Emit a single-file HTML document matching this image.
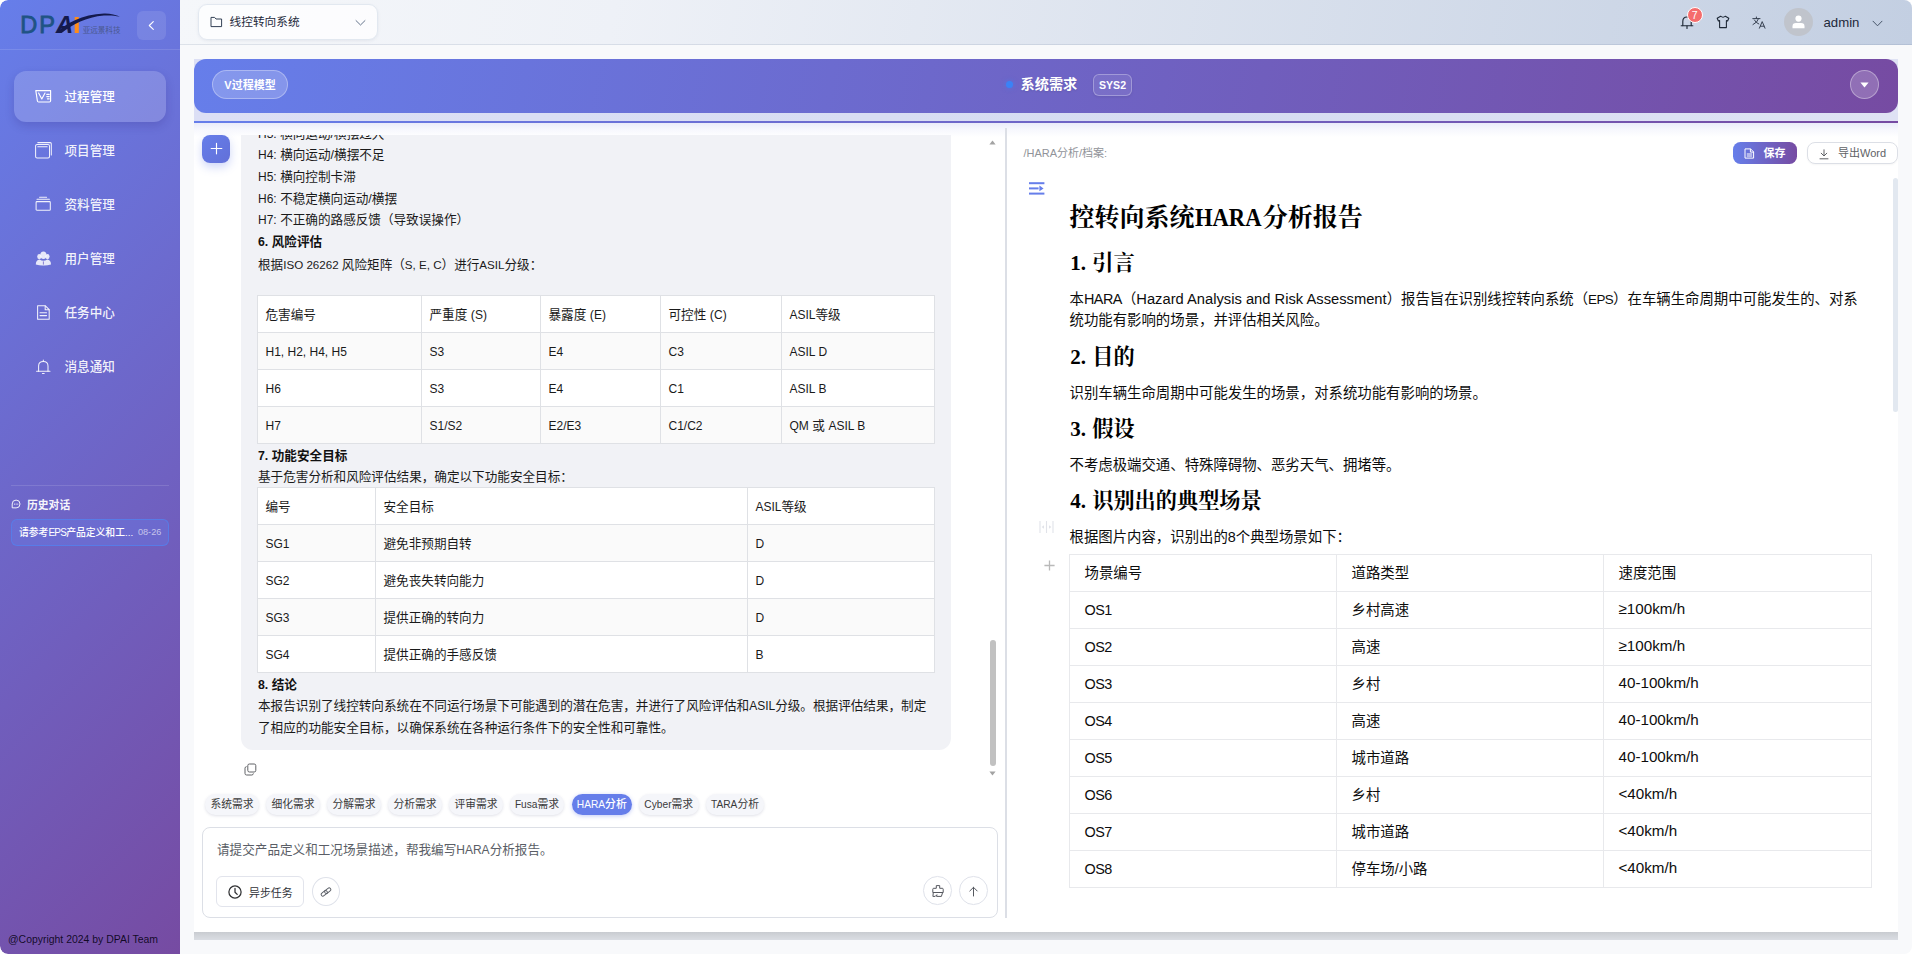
<!DOCTYPE html>
<html lang="zh-CN">
<head>
<meta charset="utf-8">
<title>DPAI</title>
<style>
*{box-sizing:border-box;margin:0;padding:0}
html,body{width:1912px;height:954px;overflow:hidden;background:#fff}
body{font-family:"Liberation Sans","Noto Sans CJK SC",sans-serif;color:#111;-webkit-font-smoothing:antialiased}
#app{position:relative;width:1912px;height:954px;overflow:hidden;background:#f8f9fb;border-radius:8px}
.abs{position:absolute}
/* ---------- sidebar ---------- */
.sb{position:absolute;left:0;top:0;width:180px;height:954px;background:linear-gradient(135deg,#667eea 0%,#764ba2 100%);border-radius:8px 0 0 8px}
.sb .logo{position:absolute;left:0;top:0;width:180px;height:50px;border-bottom:1px solid rgba(255,255,255,.12)}
.sb .collapse{position:absolute;left:137px;top:11px;width:29px;height:29px;border-radius:6px;background:rgba(255,255,255,.1)}
.mi{position:absolute;left:14px;width:152px;height:51px;border-radius:12px;color:rgba(255,255,255,.92);font-size:12.6px;font-weight:500}
.mi.act{background:rgba(255,255,255,.17);box-shadow:0 4px 10px rgba(40,30,110,.18);color:#fff}
.mi svg{position:absolute;left:21px;top:17px;width:17px;height:17px}
.mi span{position:absolute;left:50.5px;top:.9px;line-height:51px;white-space:nowrap}
.sb .hr{position:absolute;left:11px;top:485px;width:158px;height:1px;background:rgba(255,255,255,.13)}
.sb .hist-t{position:absolute;left:27px;top:496.6px;font-size:10.8px;font-weight:700;color:rgba(255,255,255,.95);line-height:16px}
.sb .hist-i{position:absolute;left:11px;top:519px;width:158px;height:27px;border-radius:6px;border:1px solid rgba(84,128,236,.8);background:rgba(102,126,234,.36);color:#fff;font-size:9.8px;font-weight:500;line-height:25px;padding-left:7px;white-space:nowrap}
.sb .hist-i b{font-weight:500;font-size:10px;letter-spacing:-.75px}
.sb .hist-i i{position:absolute;left:126px;top:0;font-style:normal;font-weight:400;font-size:9.1px;color:rgba(255,255,255,.62)}
.sb .copy{position:absolute;left:8px;top:931.8px;font-size:10.45px;line-height:16px;color:rgba(12,6,28,.95);white-space:nowrap}
/* ---------- header ---------- */
.hd{position:absolute;left:180px;top:0;width:1732px;height:45px;background:linear-gradient(100deg,#f5f7fa 0%,#eef1f7 25%,#c3cfe2 100%);border-bottom:1px solid rgba(100,116,150,.16)}
.sel{position:absolute;left:18px;top:4px;width:179.6px;height:35.6px;border:1px solid #e2e8f0;border-radius:9px;background:rgba(255,255,255,.72);box-shadow:0 1px 3px rgba(120,130,160,.12)}
.sel span{position:absolute;left:30.5px;top:-.6px;line-height:35px;font-size:11.7px;color:#1e293b}

/* ---------- banner ---------- */
.bnw{position:absolute;left:194px;top:59px;width:1704px;height:64px;background:linear-gradient(90deg,#667eea 0%,#764ba2 100%)}
.bnl{position:absolute;left:0;top:0;width:1704px;height:62px;background:linear-gradient(90deg,#dcdff5 0%,#d6dcf2 60%,#dfe2f4 100%)}
.bn{position:absolute;left:0;top:0;width:1703.5px;height:54px;border-radius:12px;background:linear-gradient(100deg,#667eea 0%,#764ba2 100%)}
.pill{position:absolute;left:18px;top:11px;width:76px;height:29px;border-radius:15px;border:1px solid rgba(255,255,255,.32);background:rgba(255,255,255,.2);color:#fff;font-size:11px;font-weight:700;line-height:28.6px;text-align:center;white-space:nowrap}
.dot{position:absolute;left:812px;top:22px;width:7px;height:7px;border-radius:50%;background:#3b82f6;box-shadow:0 0 5px rgba(59,130,246,.55)}
.bt{position:absolute;left:826.5px;top:0;line-height:51px;font-size:14.2px;font-weight:700;color:#fff;text-shadow:0 1px 2px rgba(0,0,0,.12);white-space:nowrap}
.sys{position:absolute;left:899px;top:14.5px;width:39px;height:22.5px;border-radius:6px;border:1px solid rgba(255,255,255,.3);background:rgba(255,255,255,.08);color:#fff;font-size:10.6px;font-weight:700;line-height:20.5px;text-align:center;box-shadow:0 1px 3px rgba(0,0,0,.08)}
.dd{position:absolute;left:1656px;top:11px;width:29px;height:29px;border-radius:50%;border:1px solid rgba(255,255,255,.35);background:rgba(255,255,255,.2)}

/* ---------- panel ---------- */
.pn{position:absolute;left:194px;top:123px;width:1704px;height:809px;background:#fff;overflow:hidden}
.pn-fade{position:absolute;left:0;top:0;width:1704px;height:14px;background:linear-gradient(180deg,#eaecfa 0%,#f6f7fd 45%,#fff 100%)}
.pn-sh{position:absolute;left:194px;top:932px;width:1704px;height:8px;background:linear-gradient(180deg,#c8cbd0 0%,#d2d5da 50%,#dadde3 100%)}
.plus{position:absolute;left:8px;top:11.6px;width:28px;height:28.8px;border-radius:8px;background:linear-gradient(135deg,#667eea,#6270d8);box-shadow:0 4px 10px rgba(102,126,234,.32)}
.chat{position:absolute;left:0;top:12px;width:811px;height:646px;overflow:hidden}
.bub{position:absolute;left:47px;top:0;width:710px;height:614.8px;background:#f1f2f6;border-radius:0 0 12px 12px}
.ln{position:absolute;left:17px;height:21.5px;line-height:21.5px;font-size:12.6px;color:#1a1a1a;white-space:nowrap}
.e{font-size:12px}
.e2{font-size:11.6px}
.ln.b .e{font-size:12.3px}
.ln.b{font-weight:700;color:#111}
.ct{position:absolute;border-collapse:separate;border-spacing:0;table-layout:fixed;font-size:12.6px;color:#1a1a1a;background:#fff;border-top:1px solid #dfe1e5;border-left:1px solid #dfe1e5}
.ct td{border-right:1px solid #dfe1e5;border-bottom:1px solid #dfe1e5;height:37px;padding:1px 0 0 7.5px;white-space:nowrap}
.ct td.cj{padding:0 0 1.6px 7.5px}
.ct tr.g td{background:#fafafa}
.tag{position:absolute;top:671px;height:20.5px;border-radius:10.5px;background:#f5f6fa;box-shadow:0 1px 3px rgba(60,70,110,.16);font-size:10.8px;line-height:20.5px;text-align:center;color:#3a3a3a;white-space:nowrap}
.tag .te{font-size:10.2px}
.tag.on{background:#667eea;color:#fff;font-weight:500;box-shadow:0 1px 4px rgba(102,126,234,.4)}
.inp{position:absolute;left:8px;top:704px;width:796px;height:90.5px;border:1px solid #dcdfe6;border-radius:8px;background:#fff}
.ph{position:absolute;left:14px;top:12px;line-height:21px;font-size:12.6px;color:#5a5e66;white-space:nowrap}
.ph .e{font-size:12px}
.e2{font-size:11.6px}
.async{position:absolute;left:13.2px;top:48px;width:88px;height:30.6px;border:1px solid #e2e4ec;border-radius:6px;background:#fff}
.async span{position:absolute;left:31.8px;top:1.8px;line-height:28.6px;font-size:10.9px;font-weight:400;color:#2f3238;white-space:nowrap}
.cb{position:absolute;top:48.2px;width:28.7px;height:28.7px;border-radius:50%;border:1px solid #dfe2ea;background:#fff}
.vdiv{position:absolute;left:811.2px;top:5px;width:1.8px;height:790px;background:#dcdfe6}
.crumb{position:absolute;left:829.4px;top:21.7px;line-height:16px;font-size:11px;color:#909399;white-space:nowrap}
.save{position:absolute;left:1539px;top:19px;width:63.5px;height:22px;border-radius:7.5px;background:linear-gradient(90deg,#667eea,#764ba2)}
.save span{position:absolute;left:30.5px;top:0;line-height:22px;font-size:11px;font-weight:700;color:#fff;white-space:nowrap}
.exp{position:absolute;left:1613px;top:19px;width:90.5px;height:22px;border-radius:8px;border:1px solid #dcdfe6;background:#fff;box-shadow:0 1px 2px rgba(0,0,0,.04)}
.exp span{position:absolute;left:30px;top:0;line-height:20px;font-size:11px;color:#606266;white-space:nowrap}
.rsb{position:absolute;left:1699px;top:55px;width:5px;height:233.8px;border-radius:3px;background:#e2e8f0}
.doc{position:absolute;left:875.5px;top:0;width:803px;height:809px;color:#0d0d0d}
.doc>div{position:absolute;left:0;white-space:nowrap}
.h1{font-family:"Liberation Serif","Noto Serif CJK SC",serif;font-weight:700;font-size:25px;color:#000}
.h1 .h1l{display:inline-block;font-size:26.2px;line-height:1;transform:scaleX(.862);transform-origin:0 50%;margin-left:.9px;margin-right:-9.9px}
.h2{font-family:"Liberation Serif","Noto Serif CJK SC",serif;font-weight:700;font-size:21.2px;color:#000}
.h2 .hn{font-size:21px;margin-right:6.2px;margin-left:.8px}
.p{font-size:14.4px}
.p .l{font-size:14.72px}
.p .c{letter-spacing:-.5px}
.p .c2{font-size:13.4px;letter-spacing:-.6px}
.dt{position:absolute;left:-0.5px;top:431px;width:803px;border-collapse:separate;border-spacing:0;table-layout:fixed;font-size:14.4px;border-top:1px solid #e8e9ec;border-left:1px solid #e8e9ec}
.dt td{border-right:1px solid #e8e9ec;border-bottom:1px solid #e8e9ec;height:37px;padding:0 0 0 14.5px;white-space:nowrap}
.dt td.cj{padding-bottom:4px}
.dt td.sp{padding-bottom:2.4px}
.dt .os{letter-spacing:-.5px}
.dt .l2{font-size:15.2px}
</style>
</head>
<body>
<div id="app">
<aside class="sb">
  <div class="logo">
    <svg class="abs" style="left:16px;top:6px" width="120" height="40" viewBox="0 0 120 40">
      <g font-family="Liberation Sans, sans-serif" font-size="23.6" fill="#1f5384" stroke="#1f5384" stroke-width="0.8"><text x="4.2" y="26.5">D</text><text x="23.2" y="26.5">P</text></g>
      <text transform="translate(39.8,27) scale(1.04,1)" font-family="Liberation Sans, sans-serif" font-size="23.2" font-weight="700" font-style="italic" fill="#141a4d">A</text>
      <rect x="58.7" y="11" width="4.1" height="16" fill="#ff8c1a"/>
      <path d="M40 27 C50 17 66 8.4 88 7.4 C94 7.2 100 8.6 104 10.6 C98 9.4 93 9.2 88 9.6 C70 11.2 57 18.4 45.6 27 Z" fill="#141a4d"/>
      <text x="66.7" y="27.3" font-family="Liberation Sans, Noto Sans CJK SC, sans-serif" font-size="7.55" fill="#4a588f">亚远景科技</text>
    </svg>
    <div class="collapse"><svg class="abs" style="left:9px;top:9px" width="11" height="11" viewBox="0 0 11 11"><path d="M7.3 1.6 L3.3 5.5 L7.3 9.4" fill="none" stroke="#fff" stroke-width="1.1" stroke-linecap="round" stroke-linejoin="round"/></svg></div>
  </div>
  <div class="mi act" style="top:71px">
    <svg viewBox="0 0 17 17"><g fill="none" stroke="#fff" stroke-width="1.15" stroke-linejoin="round" stroke-linecap="round"><path d="M0.8 2.6 H15.6 V12.8 Q15.6 14 14.4 14 H3.6 Q2.6 14 2.4 13 Z"/><path d="M3.6 5 L6.8 11 L10 5"/><path d="M11.8 6.4 H14.2 M11.8 8.6 H14.2 M12.4 10.8 H14.2"/></g></svg>
    <span>过程管理</span>
  </div>
  <div class="mi" style="top:125px">
    <svg viewBox="0 0 17 17"><g fill="none" stroke="rgba(255,255,255,.9)" stroke-width="1.05" stroke-linejoin="round" stroke-linecap="round"><rect x="0.6" y="2.4" width="13.9" height="13.6" rx="1.5"/><path d="M2.8 4.7 H12.2"/><path d="M2.8 .6 H15.2 Q16.3 .6 16.3 1.7 V13"/></g></svg>
    <span>项目管理</span>
  </div>
  <div class="mi" style="top:179px">
    <svg viewBox="0 0 17 17"><g fill="none" stroke="rgba(255,255,255,.9)" stroke-width="1.05" stroke-linejoin="round" stroke-linecap="round"><rect x="1.1" y="5.6" width="14.2" height="8.6" rx=".8"/><path d="M2 3.3 H14.4 M4.6 1.2 H11.6"/></g></svg>
    <span>资料管理</span>
  </div>
  <div class="mi" style="top:233px">
    <svg viewBox="0 0 17 17"><g fill="rgba(255,255,255,.84)"><ellipse cx="8.4" cy="5.2" rx="3.1" ry="3.7"/><ellipse cx="4.3" cy="6.6" rx="2.1" ry="2.6"/><ellipse cx="12.5" cy="6.6" rx="2.1" ry="2.6"/><path d="M.8 14.4 Q.8 10.2 4.6 9.6 Q8.4 12 12.2 9.6 Q16 10.2 16 14.4 Q12 15.6 8.4 15.4 Q4.8 15.6 .8 14.4Z"/></g><path d="M8.4 11.4 V14.6" stroke="#6f63c8" stroke-width="0.8"/></svg>
    <span>用户管理</span>
  </div>
  <div class="mi" style="top:287px">
    <svg viewBox="0 0 17 17"><g fill="none" stroke="rgba(255,255,255,.9)" stroke-width="1.05" stroke-linejoin="round" stroke-linecap="round"><path d="M2.6 1.8 H10.4 L14.2 5.6 V15.2 H2.6 Z"/><path d="M10.2 2 V5.8 H14"/><path d="M5 8.8 H11.6 M5 11.6 H11.6"/></g></svg>
    <span>任务中心</span>
  </div>
  <div class="mi" style="top:341px">
    <svg viewBox="0 0 17 17"><g fill="none" stroke="rgba(255,255,255,.9)" stroke-width="1.05" stroke-linejoin="round" stroke-linecap="round"><path d="M3.6 13.2 V8 Q3.6 3.4 8.3 3.4 Q13 3.4 13 8 V13.2"/><path d="M1.6 13.3 H15"/><path d="M8.3 2 V3.2 M7.4 15.4 H9.2"/></g></svg>
    <span>消息通知</span>
  </div>
  <div class="hr"></div>
  <svg class="abs" style="left:11px;top:499px" width="10" height="10" viewBox="0 0 10 10"><g fill="none" stroke="#fff" stroke-width="0.9"><path d="M1.2 8.8 V5 A3.9 3.9 0 1 1 5.1 8.9 Z" stroke-linejoin="round"/></g><g fill="#fff"><circle cx="3.4" cy="5.1" r=".55"/><circle cx="5.1" cy="5.1" r=".55"/><circle cx="6.8" cy="5.1" r=".55"/></g></svg>
  <div class="hist-t">历史对话</div>
  <div class="hist-i">请参考<b>EPS</b>产品定义和工...<i>08-26</i></div>
  <div class="copy">@Copyright 2024 by DPAI Team</div>
</aside>
<header class="hd">
  <div class="sel">
    <svg class="abs" style="left:10.8px;top:11px" width="13" height="12" viewBox="0 0 13 12"><path d="M1 1.4 H4.6 L6 3 H11.6 V10.6 H1 Z" fill="none" stroke="#334155" stroke-width="1" stroke-linejoin="round"/></svg>
    <span>线控转向系统</span>
    <svg class="abs" style="left:156px;top:13.5px" width="11" height="8" viewBox="0 0 11 8"><path d="M1 1.6 L5.5 6 L10 1.6" fill="none" stroke="#64748b" stroke-width="1" stroke-linecap="round" stroke-linejoin="round"/></svg>
  </div>
  <!-- bell -->
  <svg class="abs" style="left:1500px;top:15px" width="14" height="15" viewBox="0 0 14 15"><g fill="none" stroke="#1f2937" stroke-width="1.15" stroke-linecap="round" stroke-linejoin="round"><path d="M2.8 10.6 V6.4 Q2.8 2 7 2 Q11.2 2 11.2 6.4 V10.6"/><path d="M1.2 10.7 H12.8"/><path d="M7 11 V13.4"/></g></svg>
  <div class="abs" style="left:1506.5px;top:7px;width:16.5px;height:16px;border-radius:8px;background:#f56c6c;border:1px solid #fff;color:#fff;font-size:10.5px;line-height:14px;text-align:center">7</div>
  <!-- shirt -->
  <svg class="abs" style="left:1536px;top:15px" width="14" height="14" viewBox="0 0 14 14"><path d="M4.6 1.2 Q7 3.2 9.4 1.2 L12.8 3.2 L11.6 6 L10.4 5.6 V12.6 H3.6 V5.6 L2.4 6 L1.2 3.2 Z" fill="none" stroke="#1f2937" stroke-width="1.1" stroke-linejoin="round"/></svg>
  <!-- translate -->
  <svg class="abs" style="left:1572px;top:15.5px" width="14" height="13" viewBox="0 0 14 13"><g fill="none" stroke="#374151" stroke-width="1" stroke-linecap="round" stroke-linejoin="round"><path d="M0.8 2.6 H8"/><path d="M4.4 1 V2.6"/><path d="M6.6 2.6 Q5.6 6.4 1 8.6"/><path d="M2.4 4 Q3.8 6.8 6.8 8"/><path d="M7.4 12.2 L10.2 5.6 L13 12.2"/><path d="M8.4 10.2 H12"/></g></svg>
  <!-- avatar -->
  <div class="abs" style="left:1604px;top:8px;width:29px;height:28px;border-radius:50%;background:#c0c4cc;overflow:hidden"><svg class="abs" style="left:8px;top:7px" width="13" height="14" viewBox="0 0 13 14"><circle cx="6.5" cy="3.6" r="3.1" fill="#fff"/><path d="M.5 13.2 V11.2 Q.5 8 4 8 H9 Q12.5 8 12.5 11.2 V13.2 Z" fill="#fff"/></svg></div>
  <div class="abs" style="left:1643.5px;top:0;line-height:45px;font-size:13.2px;color:#1e293b">admin</div>
  <svg class="abs" style="left:1692px;top:19.5px" width="11" height="8" viewBox="0 0 11 8"><path d="M1 1.2 L5.5 5.8 L10 1.2" fill="none" stroke="#475569" stroke-width="1" stroke-linecap="round" stroke-linejoin="round"/></svg>
</header>

<div class="bnw">
  <div class="bnl"></div>
  <div class="bn">
    <div class="pill">V过程模型</div>
    <div class="dot"></div>
    <div class="bt">系统需求</div>
    <div class="sys">SYS2</div>
    <div class="dd"><svg class="abs" style="left:9.3px;top:11.4px" width="9" height="6" viewBox="0 0 9 6"><path d="M.4 .4 H8.6 L4.5 5.6 Z" fill="#fff"/></svg></div>
  </div>
</div>

<div class="pn">
<div class="pn-fade"></div>
<div class="plus"><svg class="abs" style="left:7.5px;top:7.9px" width="13" height="13" viewBox="0 0 13 13"><path d="M6.5 1.2 V11.8 M1.2 6.5 H11.8" stroke="#fff" stroke-width="1.15" stroke-linecap="round" fill="none"/></svg></div>
<div class="chat">
<div class="bub">
<div class="ln" style="top:-11.15px"><span class="e">H3:</span> 横向运动/横摆过大</div>
<div class="ln" style="top:10.45px"><span class="e">H4:</span> 横向运动/横摆不足</div>
<div class="ln" style="top:32.15px"><span class="e">H5:</span> 横向控制卡滞</div>
<div class="ln" style="top:53.75px"><span class="e">H6:</span> 不稳定横向运动/横摆</div>
<div class="ln" style="top:75.35px"><span class="e">H7:</span> 不正确的路感反馈（导致误操作）</div>
<div class="ln b" style="top:96.75px"><span class="e">6.</span> 风险评估</div>
<div class="ln" style="top:118.65px">根据<span class="e2">ISO 26262 </span>风险矩阵（<span class="e2">S, E, C</span>）进行<span class="e2">ASIL</span>分级：</div>
<table class="ct" style="left:16px;top:160px;width:678px"><colgroup><col style="width:164px"><col style="width:119px"><col style="width:120px"><col style="width:121px"><col style="width:153px"></colgroup>
<tr><td class="cj">危害编号</td><td class="cj">严重度 (<span class="e">S)</span></td><td class="cj">暴露度 (<span class="e">E)</span></td><td class="cj">可控性 (<span class="e">C)</span></td><td class="cj"><span class="e">ASIL</span>等级</td></tr>
<tr class="g"><td><span class="e">H1, H2, H4, H5</span></td><td><span class="e">S3</span></td><td><span class="e">E4</span></td><td><span class="e">C3</span></td><td><span class="e">ASIL D</span></td></tr>
<tr><td><span class="e">H6</span></td><td><span class="e">S3</span></td><td><span class="e">E4</span></td><td><span class="e">C1</span></td><td><span class="e">ASIL B</span></td></tr>
<tr class="g"><td><span class="e">H7</span></td><td><span class="e">S1/S2</span></td><td><span class="e">E2/E3</span></td><td><span class="e">C1/C2</span></td><td class="cj"><span class="e">QM</span> 或 <span class="e">ASIL B</span></td></tr>
</table>
<div class="ln b" style="top:310.65px"><span class="e">7.</span> 功能安全目标</div>
<div class="ln" style="top:332.45px">基于危害分析和风险评估结果，确定以下功能安全目标：</div>
<table class="ct" style="left:16px;top:352px;width:678px"><colgroup><col style="width:118px"><col style="width:372px"><col style="width:187px"></colgroup>
<tr><td class="cj">编号</td><td class="cj">安全目标</td><td class="cj"><span class="e">ASIL</span>等级</td></tr>
<tr class="g"><td><span class="e">SG1</span></td><td class="cj">避免非预期自转</td><td><span class="e">D</span></td></tr>
<tr><td><span class="e">SG2</span></td><td class="cj">避免丧失转向能力</td><td><span class="e">D</span></td></tr>
<tr class="g"><td><span class="e">SG3</span></td><td class="cj">提供正确的转向力</td><td><span class="e">D</span></td></tr>
<tr><td><span class="e">SG4</span></td><td class="cj">提供正确的手感反馈</td><td><span class="e">B</span></td></tr>
</table>
<div class="ln b" style="top:539.65px"><span class="e">8.</span> 结论</div>
<div class="ln" style="top:561.45px">本报告识别了线控转向系统在不同运行场景下可能遇到的潜在危害，并进行了风险评估和<span class="e">ASIL</span>分级。根据评估结果，制定</div>
<div class="ln" style="top:582.85px">了相应的功能安全目标，以确保系统在各种运行条件下的安全性和可靠性。</div>
</div>
<svg class="abs" style="left:50px;top:627.5px" width="13" height="13" viewBox="0 0 13 13"><g fill="none" stroke="#606266" stroke-width="1" stroke-linejoin="round"><rect x="3.8" y="1" width="8" height="8" rx="1.6"/><path d="M2.6 3.6 Q1 3.8 1 5.2 V10.4 Q1 12 2.6 12 H7.8 Q9.2 12 9.4 10.4"/></g></svg>
</div>
<svg class="abs" style="left:795px;top:16.5px" width="7" height="5" viewBox="0 0 7 5"><path d="M3.5 .4 L6.6 4.6 H.4 Z" fill="#a3a3a3"/></svg>
<div class="abs" style="left:795.5px;top:516.5px;width:6px;height:126px;border-radius:3px;background:#c1c1c1"></div>
<svg class="abs" style="left:795px;top:648px" width="7" height="5" viewBox="0 0 7 5"><path d="M3.5 4.6 L6.6 .4 H.4 Z" fill="#a3a3a3"/></svg>
<div class="tag" style="left:11px;width:54px">系统需求</div>
<div class="tag" style="left:72px;width:54px">细化需求</div>
<div class="tag" style="left:133px;width:54px">分解需求</div>
<div class="tag" style="left:194px;width:54px">分析需求</div>
<div class="tag" style="left:255px;width:54px">评审需求</div>
<div class="tag" style="left:316px;width:54px"><span class="te">Fusa</span>需求</div>
<div class="tag on" style="left:378px;width:59.5px"><span class="te">HARA</span>分析</div>
<div class="tag" style="left:444.5px;width:60.5px"><span class="te">Cyber</span>需求</div>
<div class="tag" style="left:512px;width:58px"><span class="te">TARA</span>分析</div>
<div class="inp"><div class="ph">请提交产品定义和工况场景描述，帮我编写<span class="e">HARA</span>分析报告。</div>
<div class="async"><svg class="abs" style="left:10.8px;top:8.1px" width="14" height="14" viewBox="0 0 14 14"><g fill="none" stroke="#303133" stroke-width="1.25" stroke-linecap="round" stroke-linejoin="round"><circle cx="7" cy="7" r="6.1"/><path d="M7 3.4 V7.2 L9.2 9.4"/></g></svg><span>异步任务</span></div>
<div class="cb" style="left:109.1px;top:49.1px;width:28px;height:28.8px"><svg class="abs" style="left:7.2px;top:8.2px" width="12" height="12" viewBox="0 0 12 12"><g fill="none" stroke="#5a5e66" stroke-width="0.95" transform="rotate(-38 6 6)"><rect x="0.4" y="4.3" width="6.8" height="3.4" rx="1.7"/><rect x="4.8" y="4.3" width="6.8" height="3.4" rx="1.7"/></g></svg></div>
<div class="cb" style="left:720.2px"><svg class="abs" style="left:7.4px;top:8.3px" width="12" height="12" viewBox="0 0 12 12"><g fill="none" stroke="#55585f" stroke-width="1" stroke-linejoin="round"><path d="M4.3 .6 H7.7 V3.3 H10.3 Q11.2 3.3 11.2 4.2 V7.5 H.8 V4.2 Q.8 3.3 1.7 3.3 H4.3 Z"/><path d="M1.3 7.5 L.9 11.4 H3.2 L4.9 9.7 L4.6 11.4 H9.4 L10.6 7.5"/></g></svg></div>
<div class="cb" style="left:756px"><svg class="abs" style="left:8.3px;top:8.6px" width="11" height="11" viewBox="0 0 11 11"><path d="M5.5 10 V1.3 M1.8 5 L5.5 1.3 L9.2 5" fill="none" stroke="#55585f" stroke-width="1" stroke-linecap="round" stroke-linejoin="round"/></svg></div>
</div>
<div class="vdiv"></div>
<div class="crumb">/HARA分析/档案:</div>
<div class="save"><svg class="abs" style="left:11px;top:5.6px" width="11" height="11" viewBox="0 0 11 11"><g fill="none" stroke="#fff" stroke-width="1" stroke-linejoin="round" stroke-linecap="round"><path d="M1.4 .9 H6.6 L9.6 3.9 V10.1 H1.4 Z"/><path d="M6.4 1.1 V4.1 H9.4"/><path d="M3.2 6 H7.8 M3.2 8 H7.8"/></g></svg><span>保存</span></div>
<div class="exp"><svg class="abs" style="left:11px;top:5.5px" width="10" height="11" viewBox="0 0 10 11"><g fill="none" stroke="#606266" stroke-width="1" stroke-linecap="round" stroke-linejoin="round"><path d="M5 .8 V6.6 M2.2 4.2 L5 7 L7.8 4.2"/><path d="M1 9.8 H9"/></g></svg><span>导出Word</span></div>
<div class="rsb"></div>
<svg class="abs" style="left:835px;top:58.5px" width="16" height="13" viewBox="0 0 16 13"><g fill="#667eea"><rect x="0" y=".2" width="15.4" height="2"/><rect x="0" y="5.4" width="9.6" height="2"/><path d="M10.4 3.6 L14.6 6.4 L10.4 9.2 Z"/><rect x="0" y="10.6" width="15.4" height="2"/></g></svg>
<div class="doc">
<div class="h1" style="top:77.90px;height:34px;line-height:34px">控转向系统<span class="h1l">HARA</span>分析报告</div>
<div class="h2" style="top:124.70px;height:30px;line-height:30px"><span class="hn">1.</span>引言</div>
<div class="p" style="top:165.70px;height:21px;line-height:21px">本<span class="c">HARA</span>（<span class="l">Hazard Analysis and Risk Assessment</span>）报告旨在识别线控转向系统（<span class="c2">EPS</span>）在车辆生命周期中可能发生的、对系</div>
<div class="p" style="top:186.90px;height:21px;line-height:21px">统功能有影响的场景，并评估相关风险。</div>
<div class="h2" style="top:218.70px;height:30px;line-height:30px"><span class="hn">2.</span>目的</div>
<div class="p" style="top:259.60px;height:21px;line-height:21px">识别车辆生命周期中可能发生的场景，对系统功能有影响的场景。</div>
<div class="h2" style="top:290.70px;height:30px;line-height:30px"><span class="hn">3.</span>假设</div>
<div class="p" style="top:331.60px;height:21px;line-height:21px">不考虑极端交通、特殊障碍物、恶劣天气、拥堵等。</div>
<div class="h2" style="top:362.70px;height:30px;line-height:30px"><span class="hn">4.</span>识别出的典型场景</div>
<div class="p" style="top:403.70px;height:21px;line-height:21px">根据图片内容，识别出的8个典型场景如下：</div>
<table class="dt"><colgroup><col style="width:267px"><col style="width:267px"><col style="width:268px"></colgroup>
<tr><td class="cj">场景编号</td><td class="cj">道路类型</td><td class="cj">速度范围</td></tr>
<tr><td><span class="os">OS1</span></td><td class="cj">乡村高速</td><td class="sp"><span class="l2">≥100km/h</span></td></tr>
<tr><td><span class="os">OS2</span></td><td class="cj">高速</td><td class="sp"><span class="l2">≥100km/h</span></td></tr>
<tr><td><span class="os">OS3</span></td><td class="cj">乡村</td><td class="sp"><span class="l2">40-100km/h</span></td></tr>
<tr><td><span class="os">OS4</span></td><td class="cj">高速</td><td class="sp"><span class="l2">40-100km/h</span></td></tr>
<tr><td><span class="os">OS5</span></td><td class="cj">城市道路</td><td class="sp"><span class="l2">40-100km/h</span></td></tr>
<tr><td><span class="os">OS6</span></td><td class="cj">乡村</td><td class="sp"><span class="l2">&lt;40km/h</span></td></tr>
<tr><td><span class="os">OS7</span></td><td class="cj">城市道路</td><td class="sp"><span class="l2">&lt;40km/h</span></td></tr>
<tr><td><span class="os">OS8</span></td><td class="cj">停车场/小路</td><td class="sp"><span class="l2">&lt;40km/h</span></td></tr>
</table>
</div>
<svg class="abs" style="left:844.5px;top:397.5px" width="15" height="12" viewBox="0 0 15 12"><g fill="none" stroke="#e1e3e9" stroke-width="1.1"><path d="M1 0 V12 M7.5 0 V12 M14 0 V12"/></g><path d="M2.6 6 L5 4.2 V7.8 Z M12.4 6 L10 4.2 V7.8 Z" fill="#e1e3e9"/></svg>
<svg class="abs" style="left:850px;top:436.5px" width="11" height="11" viewBox="0 0 11 11"><path d="M5.5 .4 V10.6 M.4 5.5 H10.6" stroke="#b9b9b9" stroke-width="1.3" fill="none"/></svg>
</div>
<div class="pn-sh"></div>

</div>
</body>
</html>
